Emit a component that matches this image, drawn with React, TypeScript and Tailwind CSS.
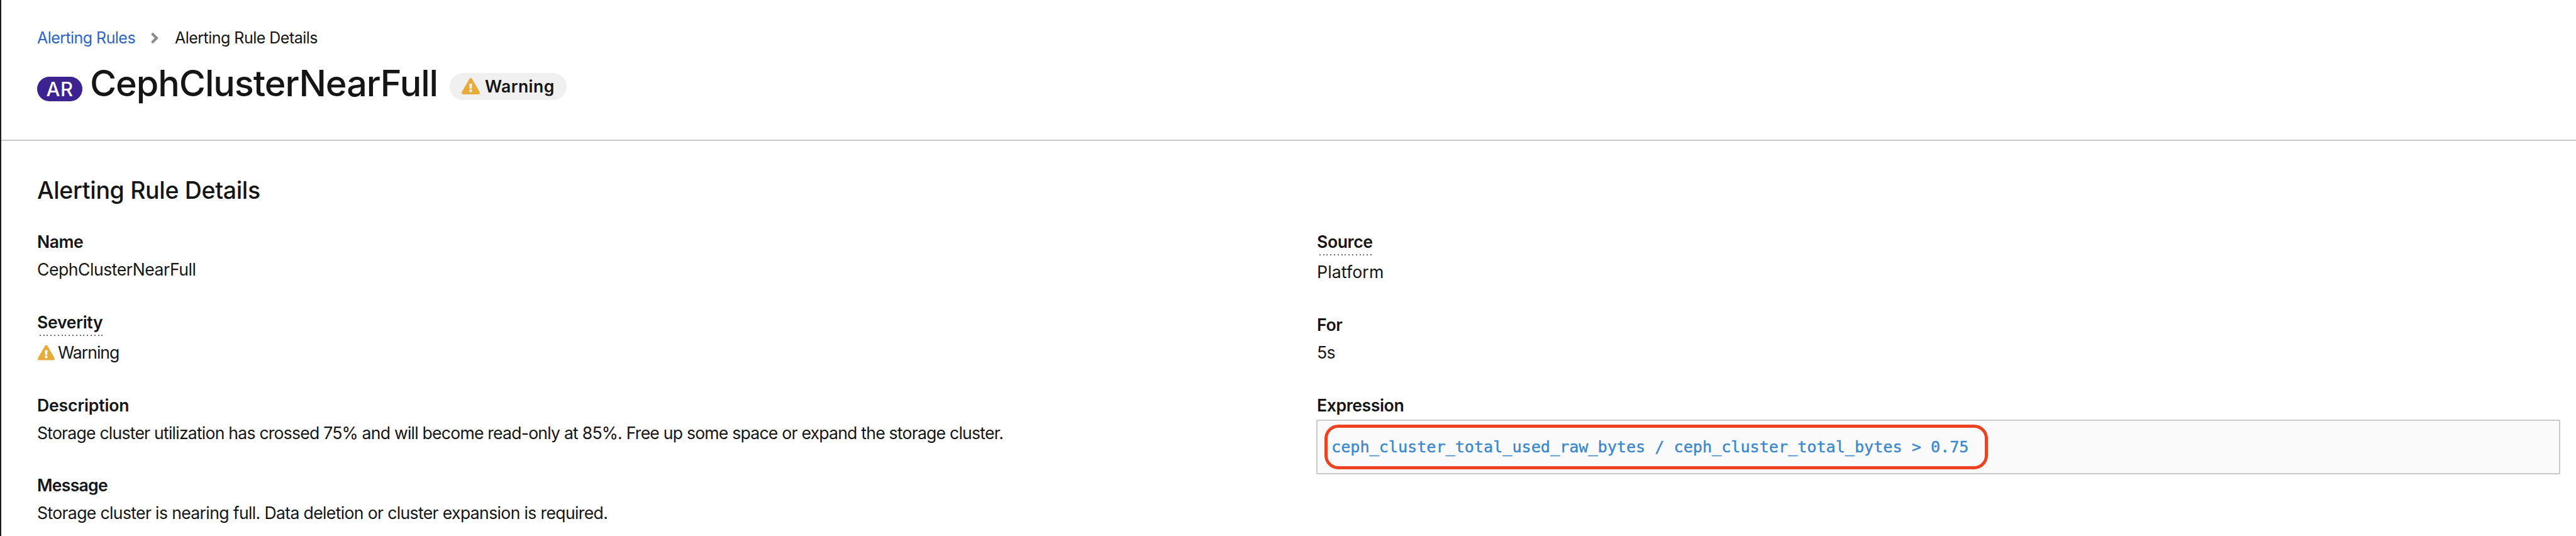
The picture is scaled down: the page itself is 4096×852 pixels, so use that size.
import type { ReactNode } from "react";
import { FaAngleRight, FaExclamationTriangle } from "react-icons/fa";

function Label({ children, className = "" }: { children: ReactNode; className?: string }) {
  return (
    <dt className={`w-fit text-[26.6px] leading-[44px] font-semibold ${className}`}>
      {children}
    </dt>
  );
}

function HelpLabel({ children, className = "" }: { children: ReactNode; className?: string }) {
  return (
    <dt className={`w-fit text-[26.6px] leading-[44px] font-semibold ${className}`}>
      {children}
      <div className="-mt-[2px] h-[2px] bg-[repeating-linear-gradient(90deg,transparent_0_3.8px,#6a6e73_3.8px_5.8px)]" />
    </dt>
  );
}

function Value({ children, className = "" }: { children: ReactNode; className?: string }) {
  return <dd className={`text-[26.6px] leading-[44px] ${className}`}>{children}</dd>;
}

export default function App() {
  return (
    <div className="h-[852px] w-[4096px] overflow-hidden border-l-2 border-[#1b1d25] bg-white font-['Inter',sans-serif] whitespace-nowrap text-[#151515]">
      <header className="h-[224px] border-b-2 border-[#c9c9c9] pt-10 pl-[57px]">
        <nav className="flex h-10 items-center text-[25px] leading-[40px]">
          <a className="w-[180px] tracking-[-0.55px] text-[#2b66c7]">Alerting Rules</a>
          <FaAngleRight className="h-[27px] w-[14px] text-[#8a8d90]" />
          <span className="ml-[25px] tracking-[-0.52px]">Alerting Rule Details</span>
        </nav>
        <div className="mt-3 flex h-20 items-center">
          <span className="mt-[18px] flex h-[39px] w-[72px] items-center justify-center rounded-full bg-[#3d2291] text-[31px] leading-[39px] font-medium tracking-[0.5px] text-white">
            AR
          </span>
          <h1 className="ml-3 w-[572px] text-[57.5px] leading-[80px] font-medium tracking-[-1.07px]">
            CephClusterNearFull
          </h1>
          <span className="mt-[10px] flex h-[43px] w-[186px] items-center rounded-full bg-[#f0f0f0] pl-[19px]">
            <FaExclamationTriangle className="-mt-px h-[26px] w-[29px] text-[#e6ab3b]" />
            <span className="ml-2 text-[26.6px] leading-[42px] font-semibold tracking-[0.4px]">
              Warning
            </span>
          </span>
        </div>
      </header>

      <main className="pt-[54px] pr-[25px] pl-[57px]">
        <h2 className="text-[37.5px] leading-[50px] font-medium tracking-[-0.34px]">
          Alerting Rule Details
        </h2>
        <div className="mt-[34px] grid grid-cols-[2034px_1978px]">
          <dl className="flex flex-col">
            <div className="h-[128px]">
              <Label className="tracking-[-0.5px]">Name</Label>
              <Value className="tracking-[-0.48px]">CephClusterNearFull</Value>
            </div>
            <div className="h-[132px]">
              <HelpLabel className="tracking-[-0.3px]">Severity</HelpLabel>
              <Value className="mt-1 flex items-center tracking-[-1px]">
                <FaExclamationTriangle className="ml-px h-[25px] w-[27px] text-[#e6ab3b]" />
                <span className="ml-[5px]">Warning</span>
              </Value>
            </div>
            <div className="h-[127px]">
              <Label className="tracking-[-0.16px]">Description</Label>
              <Value className="tracking-[-0.78px]">
                Storage cluster utilization has crossed 75% and will become read-only at 85%. Free up
                some space or expand the storage cluster.
              </Value>
            </div>
            <div>
              <Label className="tracking-[-0.73px]">Message</Label>
              <Value className="tracking-[-0.65px]">
                Storage cluster is nearing full. Data deletion or cluster expansion is required.
              </Value>
            </div>
          </dl>
          <dl className="flex flex-col">
            <div className="h-[132px] pl-px">
              <HelpLabel className="tracking-[-0.39px]">Source</HelpLabel>
              <Value className="mt-1 tracking-[0.15px]">Platform</Value>
            </div>
            <div className="h-[128px] pl-px">
              <Label className="tracking-[-0.33px]">For</Label>
              <Value className="tracking-[-0.7px]">5s</Value>
            </div>
            <div>
              <Label className="pl-px tracking-[-0.39px]">Expression</Label>
              <dd className="mt-[1px] flex h-[87px] items-center rounded-[2px] border-2 border-[#c9c9c9] bg-[#fafafa] pl-[11px]">
                <code className="flex h-[71px] w-[1055px] items-center rounded-[22px] border-[5.3px] border-[#eb4224] pl-[6px] font-['DejaVu_Sans_Mono',monospace] text-[25.13px] leading-[40px] text-[#3b87cb] [-webkit-text-stroke:0.4px_#3b87cb]">
                  ceph_cluster_total_used_raw_bytes / ceph_cluster_total_bytes &gt; 0.75
                </code>
              </dd>
            </div>
          </dl>
        </div>
      </main>
    </div>
  );
}
